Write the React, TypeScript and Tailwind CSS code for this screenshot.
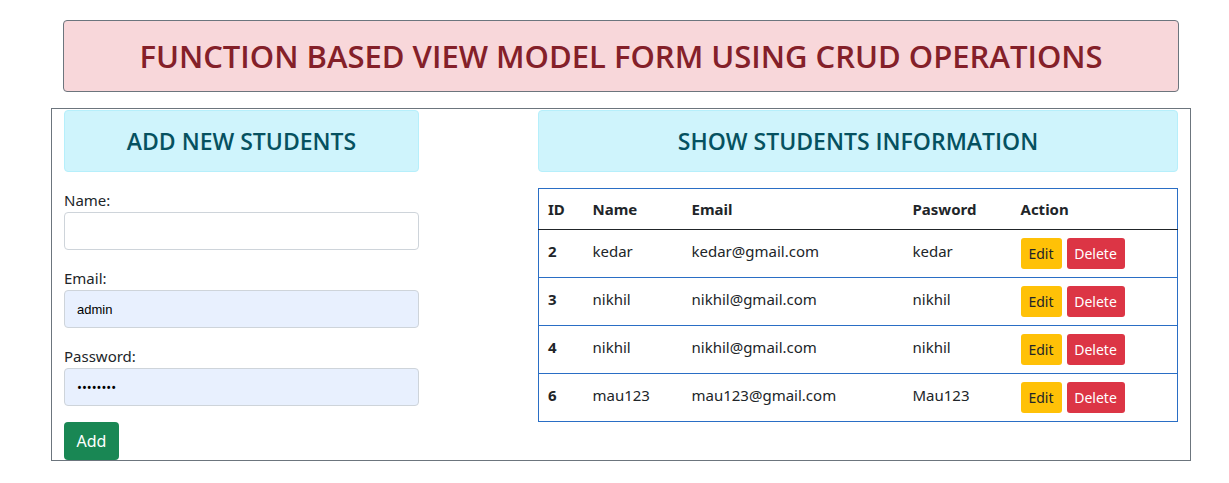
import React from 'react';

const students = [
  { id: 2, name: 'kedar', email: 'kedar@gmail.com', password: 'kedar' },
  { id: 3, name: 'nikhil', email: 'nikhil@gmail.com', password: 'nikhil' },
  { id: 4, name: 'nikhil', email: 'nikhil@gmail.com', password: 'nikhil' },
  { id: 6, name: 'mau123', email: 'mau123@gmail.com', password: 'Mau123' },
];

export default function App() {
  return (
    <div className="min-h-screen bg-white text-[#212529] font-['Noto_Sans',sans-serif] pt-[20px]">
      {/* Title */}
      <div className="ml-[63px] w-[1116px] h-[72px] flex items-center justify-center bg-[#f8d7da] border border-[#6c757d] rounded-[4px]">
        <h2 className="text-[31px] text-[#842029] font-semibold font-['Open_Sans',sans-serif]">FUNCTION BASED VIEW MODEL FORM USING CRUD OPERATIONS</h2>
      </div>

      {/* Main container */}
      <div className="mt-[16px] ml-[51px] w-[1140px] h-[353px] border border-[#6c757d] flex pl-[12px] pt-[1px]">
        {/* Left: form */}
        <div className="w-[355px]">
          <div className="h-[62px] flex items-center justify-center bg-[#cff4fc] border border-[#b6effb] rounded-[4px]">
            <h4 className="text-[23px] text-[#055160] font-semibold font-['Open_Sans',sans-serif]">ADD NEW STUDENTS</h4>
          </div>
          <form className="mt-[18px]">
            <label className="block text-[15px] leading-[20px]">Name:</label>
            <input type="text" className="mt-[2px] block w-full h-[38px] border border-[#ced4da] rounded-[4px] bg-white px-[12px]" />
            <label className="block mt-[18px] text-[15px] leading-[20px]">Email:</label>
            <input type="text" defaultValue="admin" className="mt-[2px] block w-full h-[38px] border border-[#ced4da] rounded-[4px] bg-[#e8f0fe] px-[12px] text-[13px] font-['Liberation_Sans',sans-serif] text-black" />
            <label className="block mt-[18px] text-[15px] leading-[20px]">Password:</label>
            <input type="password" defaultValue="password" className="mt-[2px] block w-full h-[38px] border border-[#ced4da] rounded-[4px] bg-[#e8f0fe] px-[12px] text-[13px] text-black" />
            <button type="button" className="mt-[16px] h-[38px] w-[55px] bg-[#198754] text-white rounded-[4px] text-[16px]">Add</button>
          </form>
        </div>

        {/* Right: table */}
        <div className="ml-[119px] w-[640px]">
          <div className="h-[62px] flex items-center justify-center bg-[#cff4fc] border border-[#b6effb] rounded-[4px]">
            <h4 className="text-[23px] text-[#055160] font-semibold font-['Open_Sans',sans-serif]">SHOW STUDENTS INFORMATION</h4>
          </div>
          <table className="mt-[16px] w-full border border-[#2a6ec5] border-collapse text-[15px]">
            <thead>
              <tr className="h-[41px] border-b border-b-[#212529]">
                <th className="text-left font-bold pl-[9px] w-[54px]">ID</th>
                <th className="text-left font-bold w-[99px]">Name</th>
                <th className="text-left font-bold w-[221px]">Email</th>
                <th className="text-left font-bold w-[108px]">Pasword</th>
                <th className="text-left font-bold">Action</th>
              </tr>
            </thead>
            <tbody>
              {students.map((s) => (
                <tr key={s.id} className="h-[48px] border-b border-[#2a6ec5]">
                  <td className="pl-[9px] font-bold pb-[4px]">{s.id}</td>
                  <td className="pb-[4px]">{s.name}</td>
                  <td className="pb-[4px]">{s.email}</td>
                  <td className="pb-[4px]">{s.password}</td>
                  <td>
                    <div className="flex gap-[5px]">
                      <button className="h-[31px] w-[41px] bg-[#ffc107] text-[#212529] rounded-[3px] text-[14px]">Edit</button>
                      <button className="h-[31px] w-[58px] bg-[#dc3545] text-white rounded-[3px] text-[14px]">Delete</button>
                    </div>
                  </td>
                </tr>
              ))}
            </tbody>
          </table>
        </div>
      </div>
    </div>
  );
}
